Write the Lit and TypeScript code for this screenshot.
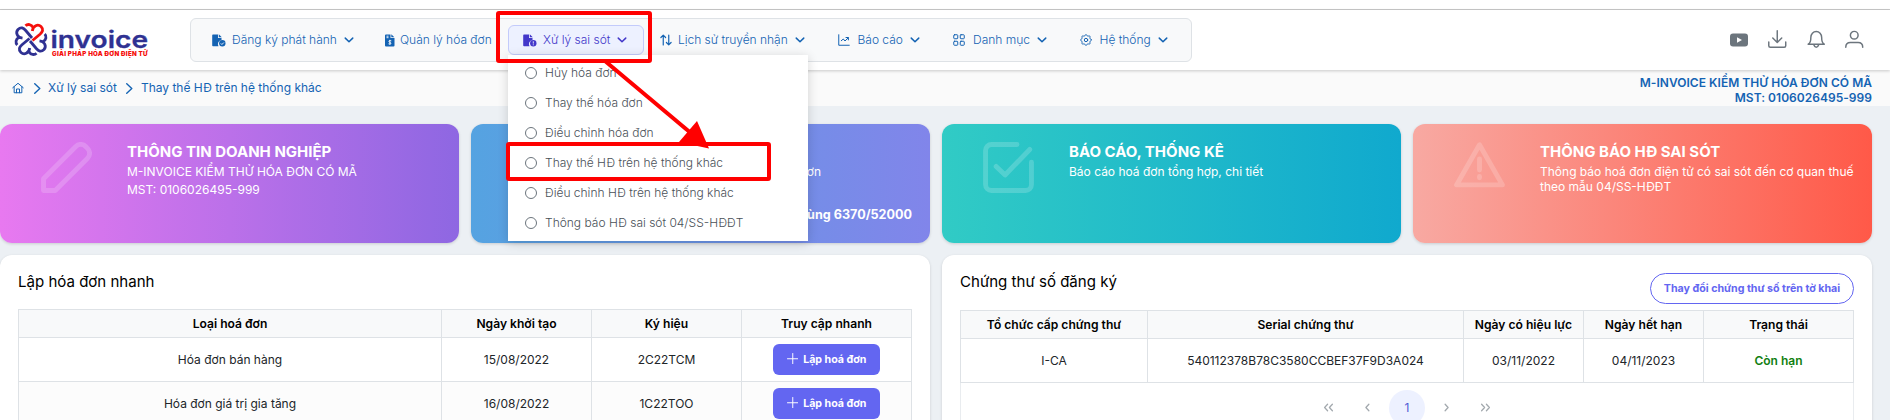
import { LitElement, html, svg, css, nothing, TemplateResult } from 'lit';
import { customElement } from 'lit/decorators.js';
import { styleMap } from 'lit/directives/style-map.js';

/* Scalloped outline with eight lobes for the settings gear */
const gearPath = 'M' + Array.from({ length: 96 }, (_, i) => {
  const a = (i / 96) * Math.PI * 2;
  const r = 9.6 + 1.3 * Math.cos(8 * a);
  return `${(12 + r * Math.cos(a)).toFixed(2)} ${(12 + r * Math.sin(a)).toFixed(2)}`;
}).join('L') + 'z';

/* Outline glyphs, all in a 24x24 box */
const ICONS: Record<string, TemplateResult> = {
  chevron: svg`<path d="M4.500 8.200l7.500 7.300 7.500-7.300" stroke-width="3"/>`,
  right: svg`<path d="M6 1.500l11 10.500-11 10.500" stroke-width="3"/>`,
  home: svg`<path d="M1.500 11.500L12 2.500l10.500 9M4.300 9.500V21.500h15.400V9.500M9 21.500v-7.500h6v7.500"/>`,
  updown: svg`<path d="M6.500 22V2.500M1.800 7l4.700-4.700L11.200 7M17.500 2v19.500M12.800 17l4.700 4.700 4.700-4.700" stroke-width="2.400"/>`,
  chart: svg`<path d="M1.500 1.500v21h21M6.500 13.500l4-3.500 3.500 4 6.500-6.500M16 7h4.800v4.800"/>`,
  grid: svg`<rect x="1.500" y="1.500" width="8" height="8" rx="1.500"/><rect x="14.500" y="1.500" width="8" height="8" rx="1.500"/><rect x="1.500" y="14.500" width="8" height="8" rx="1.500"/><rect x="14.500" y="14.500" width="8" height="8" rx="1.500"/>`,
  gear: svg`<path d="${gearPath}"/><circle cx="12" cy="12" r="3.400"/>`,
  download: svg`<path d="M12 1v15M6.200 10.500l5.800 5.700 5.800-5.700M1 15.500v5a2 2 0 0 0 2 2h18a2 2 0 0 0 2-2v-5"/>`,
  bell: svg`<path d="M1.500 18.500c2.500-.8 3.500-3 3.500-9 0-4 3-7.500 7-7.500s7 3.500 7 7.500c0 6 1 8.200 3.500 9zM9 19.500c.6 2 1.600 2.800 3 2.800s2.400-.8 3-2.800"/>`,
  user: svg`<circle cx="12" cy="6.800" r="5"/><path d="M1 22.500c0-4 2.500-6.200 6-6.200h10c3.500 0 6 2.200 6 6.200"/>`,
  pencil: svg`<path d="M1.200 22.800v-5.500L16.400 2.100a3.200 3.200 0 0 1 4.600 0l.9.900a3.200 3.200 0 0 1 0 4.600L6.700 22.800z"/>`,
  check: svg`<path d="M16 1.200H4A2.800 2.800 0 0 0 1.200 4v16A2.800 2.800 0 0 0 4 22.800h16a2.800 2.800 0 0 0 2.800-2.800V9.500M6.200 11.500l4.200 4L22 3.500"/>`,
  warn: svg`<path d="M12 1.300L1.200 20.200h21.600zM12 8v5.200M12 16.200v.6"/>`,
  plus: svg`<path d="M12 1v22M1 12h22"/>`,
  angle: svg`<path d="M9 5l6.500 7L9 19" stroke-width="2.800"/>`,
  angles: svg`<path d="M3.500 5l6.500 7-6.500 7M14 5l6.500 7-6.500 7" stroke-width="2.800"/>`,
};
const icon = (name: string, cls = '') => svg`<svg class="ic ${cls}" viewBox="0 0 24 24">${ICONS[name]}</svg>`;

const sheet = 'M1 .5h5v3.500h3.500v2A4.200 4.200 0 0 0 6.500 12.300H1A1 1 0 0 1 .2 11.500v-10A1 1 0 0 1 1 .5zM6.800.3l3 3h-3z';
const fileCheck = svg`<svg class="file" viewBox="0 0 14 13"><path class="f" d="${sheet}"/><circle class="f" cx="10.300" cy="9.300" r="3.200"/><path class="w" d="M8.800 9.400l1.100 1.100 2-2"/></svg>`;
const fileAlert = svg`<svg class="file" viewBox="0 0 14 13"><path class="f" d="${sheet}"/><circle class="f" cx="10.300" cy="9.300" r="3.200"/><path class="w" d="M10.300 7.300v2.300M10.300 10.300v1"/></svg>`;
const fileMoney = svg`<svg class="file money" viewBox="0 0 10 13"><path class="f" d="M1 .5h4.500V4h4v7.500a1 1 0 0 1-1 1h-7.500a1 1 0 0 1-1-1v-10A1 1 0 0 1 1 .5zM6.300.3l3 3h-3z"/><path class="w" d="M6.300 6.800c-2.800-1-3.200 1-1.500 1.500s1.600 2.300-1.300 1.500M4.900 5.800v5M1.500 2.200h2M1.500 3.700h2"/></svg>`;

const MENU: { label: string; glyph: TemplateResult; cls: string; open?: boolean }[] = [
  { label: 'Đăng ký phát hành', glyph: fileCheck, cls: 'm1' },
  { label: 'Quản lý hóa đơn', glyph: fileMoney, cls: 'm2' },
  { label: 'Xử lý sai sót', glyph: fileAlert, cls: 'm3', open: true },
  { label: 'Lịch sử truyền nhận', glyph: icon('updown'), cls: 'm4' },
  { label: 'Báo cáo', glyph: icon('chart'), cls: 'm5' },
  { label: 'Danh mục', glyph: icon('grid'), cls: 'm6' },
  { label: 'Hệ thống', glyph: icon('gear'), cls: 'm7' },
];
const SUB = ['Hủy hóa đơn', 'Thay thế hóa đơn', 'Điều chỉnh hóa đơn', 'Thay thế HĐ trên hệ thống khác', 'Điều chỉnh HĐ trên hệ thống khác', 'Thông báo HĐ sai sót 04/SS-HĐĐT'];

const CARDS = [
  { ic: 'pencil', title: 'THÔNG TIN DOANH NGHIỆP', lines: ['M-INVOICE KIỂM THỬ HÓA ĐƠN CÓ MÃ', 'MST: 0106026495-999'], from: '#e879f0', to: '#8e67e2', cls: 'loose' },
  { ic: '', title: '', lines: ['đơn'], foot: 'dùng 6370/52000', from: '#55a3e1', to: '#8185ea', cls: 'covered' },
  { ic: 'check', title: 'BÁO CÁO, THỐNG KÊ', lines: ['Báo cáo hoá đơn tổng hợp, chi tiết'], from: '#31cbc5', to: '#10a9ce', cls: '' },
  { ic: 'warn', title: 'THÔNG BÁO HĐ SAI SÓT', lines: ['Thông báo hoá đơn điện tử có sai sót đến cơ quan thuế theo mẫu 04/SS-HĐĐT'], from: '#f8a9a2', to: '#ff5948', cls: '' },
];

@customElement('app-root')
export class AppRoot extends LitElement {
  static styles = css`
    :host { display: block; height: 420px; overflow: hidden; position: relative; background: #ecf0f4; font: 12px/16px Inter, "Open Sans", sans-serif; color: #212529; }
    * { box-sizing: border-box; }
    svg { display: block; flex: none; }
    .ic { width: 12px; height: 12px; fill: none; stroke: currentColor; stroke-width: 2; stroke-linecap: round; stroke-linejoin: round; }
    .file { width: 14px; height: 13px; }
    .file.money { width: 10px; }
    .f { fill: currentColor; }
    .w { fill: none; stroke: #fff; stroke-width: .9; }
    .strip { height: 10px; background: #fff; border-bottom: 1px solid #c9c9c9; }
    header { position: relative; display: flex; height: 60px; padding-top: 8px; background: #fff; box-shadow: 0 1px 3px rgba(0, 0, 0, .2); }
    .logo { width: 136px; height: 42px; margin-left: 14px; }
    .lg { fill: none; stroke-width: 2.800; stroke-linejoin: round; }
    .bar { display: flex; align-items: center; width: 1002px; height: 44px; margin-left: 40px; padding-left: 5px; border: 1px solid #dee2e6; border-radius: 6px; background: #f8f9fa; color: #1463b3; font-weight: 360; }
    .mi { display: flex; align-items: center; height: 30px; padding: 0 0 0 15px; border: 1px solid transparent; border-radius: 6px; white-space: nowrap; }
    .mi .lbl { margin-left: 6px; }
    .mi > .chev { width: 12px; height: 12px; margin: 0 0 0 6px; }
    .open { background: #edf1ff; border-color: #c3cbfb; color: #4338ca; padding-left: 14px; }
    .open .w { stroke: #edf1ff; }
    .m1 { width: 173px; }
    .m2 { width: 139px; }
    .m2 .lbl { margin-left: 5px; }
    .m3 { width: 136px; }
    .m4 { width: 178px; }
    .m4 .lbl { letter-spacing: -.03px; }
    .m5 { width: 115px; }
    .m5 .lbl, .m7 .lbl { margin-left: 7.500px; }
    .m6 .lbl { margin-left: 8px; }
    .m6 { width: 127px; }
    .acts { display: flex; gap: 20px; margin: 12px 0 0 538px; color: #6c757d; }
    .acts .ic { width: 18.500px; height: 18.500px; stroke-width: 1.900; }
    .acts .yt { width: 18px; height: 14px; margin-top: 3px; }
    .crumb { display: flex; align-items: center; justify-content: space-between; height: 36px; padding: 0 18px 0 12px; background: #fafafa; color: #1463b3; }
    .path { display: flex; align-items: center; }
    .path .sep { width: 11px; height: 11px; margin: 0 5.500px 0 7.500px; }
    .who { text-align: right; font-weight: 600; line-height: 15px; padding-top: 4px; letter-spacing: .03px; }
    .cards { display: grid; grid-template-columns: repeat(4, 459px); gap: 12px; padding-top: 18px; }
    .card { position: relative; display: flex; height: 119px; padding: 16px 16px 0 41px; border-radius: 12px; color: #fff; box-shadow: 0 1px 3px rgba(0, 0, 0, .15); }
    .big { width: 51px; margin: 2px 35px 0 0; }
    .big .ic { width: 51px; height: 51px; stroke-width: 2.300; opacity: .18; }
    .ttl { height: 24px; font: 700 15px/23px Inter, sans-serif; }
    .line { line-height: 15px; }
    .loose .line { margin-bottom: 3px; }
    .covered { justify-content: flex-end; padding-right: 109px; }
    .covered .big { display: none; }
    .foot { position: absolute; right: 18px; bottom: 20px; font-weight: 700; line-height: 16px; font-size: 12.600px; }
    .panels { display: grid; grid-template-columns: 930px 930px; gap: 12px; padding-top: 12px; }
    .panel { height: 200px; padding: 0 18px; border-radius: 12px; background: #fff; box-shadow: 0 1px 3px rgba(0, 0, 0, .15); }
    .head { display: flex; justify-content: space-between; height: 54px; padding-top: 17px; color: #000; }
    .head.tall { height: 55px; }
    .head h2 { margin: 0; font: 400 15.050px/19px Inter, sans-serif; }
    .pill { height: 31px; width: 204px; margin-top: 1px; border: 1px solid #6366f1; border-radius: 16px; color: #6366f1; font: 700 10.650px/29px Inter, sans-serif; text-align: center; white-space: nowrap; }
    .tbl { display: grid; width: 894px; border: 1px solid #dee2e6; border-bottom: 0; text-align: center; line-height: 15px; }
    .t1 { grid-template-columns: 423px 150px 150px 169px; }
    .t2 { grid-template-columns: 187px 316px 120px 120px 149px; }
    .tbl > div { display: flex; align-items: center; justify-content: center; height: 44px; border-right: 1px solid #dee2e6; border-bottom: 1px solid #dee2e6; }
    .tbl > .last { border-right: 0; }
    .tbl > .th { height: 28px; background: #f8f9fa; font-weight: 600; color: #000; font-size: 12.100px; }
    .tbl > .alt { background: #fcfcfc; }
    .tbl > .ok { color: #118011; font-weight: 600; }
    .btn { display: flex; align-items: center; justify-content: center; width: 107px; height: 31px; border-radius: 6px; background: #6366f1; color: #fff; font: 700 10.650px/15px Inter, sans-serif; }
    .btn .ic { width: 11.500px; height: 11.500px; margin: -2px 5px 0 0; }
    .pager { display: flex; align-items: center; justify-content: center; height: 50px; border: 1px solid #e9ecef; border-top: 0; color: #a3a9ae; }
    .pg { display: flex; width: 39.300px; justify-content: center; }
    .pg .ic { width: 11px; height: 11px; }
    .flip { transform: scaleX(-1); }
    .cur { display: flex; align-items: center; justify-content: center; width: 36px; height: 36px; margin: 0 1.600px; border-radius: 50%; background: #edf1ff; color: #4f5bd5; }
    .drop { position: absolute; left: 508px; top: 55px; width: 300px; height: 186px; padding: 3px 0 0 17px; background: #fff; box-shadow: 0 2px 10px rgba(0, 0, 0, .16); color: #495057; font-weight: 350; }
    .opt { display: flex; align-items: center; height: 30px; }
    .opt i { width: 12px; height: 12px; margin-right: 8px; border: 1px solid #6c757d; border-radius: 50%; }
    .marks { position: absolute; left: 0; top: 0; width: 1890px; height: 420px; pointer-events: none; }
    .box { fill: none; stroke: #f00; stroke-width: 4; }
    .shaft { stroke: #f00; stroke-width: 4; }
    .tip { fill: #f00; }
  `;

  private logo() {
    const lobe = 'M25.500 25.800C27.500 23.800 31.500 24 33 27.500M32.300 31C33 25.500 38 23.800 41 26.500C44 29.500 42.500 32 40 34.200L32.500 40.500';
    return html`<svg class="logo" viewBox="14 18 136 42">
      ${[90, 180, 270].map(a => svg`<path class="lg" stroke="#2f3192" d="${lobe}" transform="rotate(${a} 31 39.500)"/>`)}
      <path class="lg" stroke="#f5100c" d="${lobe}"/>
      <text x="50.500" y="47.700" font-family="Inter" font-weight="600" font-size="24" fill="#2f3192" stroke="#2f3192" stroke-width=".3" textLength="97.500" lengthAdjust="spacingAndGlyphs">invoice</text>
      <text x="52" y="55.600" font-family="Inter" font-weight="900" font-size="6.200" fill="#f5100c" textLength="95.500" lengthAdjust="spacing">GIẢI PHÁP HÓA ĐƠN ĐIỆN TỬ</text>
    </svg>`;
  }

  private row(cells: unknown[], cls: string) {
    return cells.map((c, i) => html`<div class="${cls} ${i === cells.length - 1 ? 'last' : ''}">${c}</div>`);
  }

  render() {
    const btn = html`<span class="btn">${icon('plus')}Lập hoá đơn</span>`;
    return html`
      <div class="strip"></div>
      <header>
        ${this.logo()}
        <nav class="bar">
          ${MENU.map(m => html`<div class="mi ${m.cls} ${m.open ? 'open' : ''}">${m.glyph}<span class="lbl">${m.label}</span>${m.cls === 'm2' ? nothing : icon('chevron', 'chev')}</div>`)}
        </nav>
        <div class="acts">
          <svg class="yt" viewBox="0 0 18 14"><rect width="18" height="13" y=".5" rx="3" fill="#6c757d"/><path d="M7 4.300l5 2.700-5 2.700z" fill="#fff"/></svg>
          ${icon('download')}${icon('bell')}${icon('user')}
        </div>
      </header>
      <div class="crumb">
        <div class="path">${icon('home')}${icon('right', 'sep')}<span>Xử lý sai sót</span>${icon('right', 'sep')}<span>Thay thế HĐ trên hệ thống khác</span></div>
        <div class="who">M-INVOICE KIỂM THỬ HÓA ĐƠN CÓ MÃ<br>MST: 0106026495-999</div>
      </div>
      <div class="cards">
        ${CARDS.map(c => html`<div class="card ${c.cls}" style=${styleMap({ background: `linear-gradient(90deg, ${c.from}, ${c.to})` })}>
          <div class="big">${c.ic ? icon(c.ic) : nothing}</div>
          <div>
            <div class="ttl">${c.title}</div>
            ${c.lines.map(l => html`<div class="line">${l}</div>`)}
          </div>
          ${c.foot ? html`<div class="foot">${c.foot}</div>` : nothing}
        </div>`)}
      </div>
      <div class="panels">
        <section class="panel">
          <div class="head"><h2>Lập hóa đơn nhanh</h2></div>
          <div class="tbl t1">
            ${this.row(['Loại hoá đơn', 'Ngày khởi tạo', 'Ký hiệu', 'Truy cập nhanh'], 'th')}
            ${this.row(['Hóa đơn bán hàng', '15/08/2022', '2C22TCM', btn], '')}
            ${this.row(['Hóa đơn giá trị gia tăng', '16/08/2022', '1C22TOO', btn], 'alt')}
          </div>
        </section>
        <section class="panel">
          <div class="head tall"><h2>Chứng thư số đăng ký</h2><span class="pill">Thay đổi chứng thư số trên tờ khai</span></div>
          <div class="tbl t2">
            ${this.row(['Tổ chức cấp chứng thư', 'Serial chứng thư', 'Ngày có hiệu lực', 'Ngày hết hạn', 'Trạng thái'], 'th')}
            <div>I-CA</div><div>540112378B78C3580CCBEF37F9D3A024</div><div>03/11/2022</div><div>04/11/2023</div><div class="ok last">Còn hạn</div>
          </div>
          <div class="pager">
            <span class="pg">${icon('angles', 'flip')}</span><span class="pg">${icon('angle', 'flip')}</span>
            <span class="cur">1</span>
            <span class="pg">${icon('angle')}</span><span class="pg">${icon('angles')}</span>
          </div>
        </section>
      </div>
      <div class="drop">${SUB.map(s => html`<div class="opt"><i></i>${s}</div>`)}</div>
      <svg class="marks" viewBox="0 0 1890 420">
        <rect class="box" x="498" y="13" width="152" height="48" rx="1"/>
        <rect class="box" x="508" y="144" width="261" height="35" rx="1"/>
        <path class="shaft" d="M605 61L692 134"/>
        <path class="tip" d="M697 121L709 148.500 679 142z"/>
      </svg>`;
  }
}
